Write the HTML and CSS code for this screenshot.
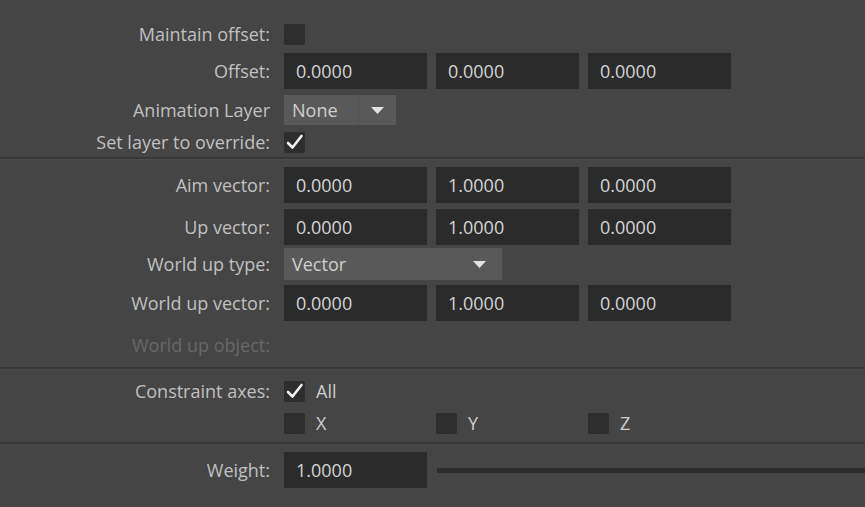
FILE: index.html
```html
<!DOCTYPE html>
<html lang="en">
<head>
    <meta charset="UTF-8">
    <meta name="viewport" content="width=device-width, initial-scale=1.0">
    <title>Aim Constraint Options</title>
    <link rel="stylesheet" href="styles.css">
</head>
<body>
    <div class="panel">
        <div class="row row-check first">
            <span class="label">Maintain offset:</span>
            <div class="controls"><span class="check"></span></div>
        </div>
        <div class="row row-field gap8">
            <span class="label">Offset:</span>
            <div class="triple">
                <div class="field">0.0000</div>
                <div class="field">0.0000</div>
                <div class="field">0.0000</div>
            </div>
        </div>
        <div class="row row-menu gap6">
            <span class="label">Animation Layer</span>
            <div class="controls">
                <div class="menu menu-small">
                    <span class="menu-text">None</span>
                    <span class="menu-btn">
                        <svg width="13" height="7" viewBox="0 0 13 7"><polygon points="0,0 13,0 6.5,7" fill="#e2e2e2"/></svg>
                    </span>
                </div>
            </div>
        </div>
        <div class="row row-check gap6">
            <span class="label">Set layer to override:</span>
            <div class="controls">
                <span class="check">
                    <svg width="21" height="21" viewBox="0 0 21 21"><polyline points="4,11 8.5,15.5 17.5,4" fill="none" stroke="#f2f2f2" stroke-width="2.6" stroke-linecap="round" stroke-linejoin="round"/></svg>
                </span>
            </div>
        </div>

        <div class="sep sep-a"></div>

        <div class="row row-field gap8">
            <span class="label">Aim vector:</span>
            <div class="triple">
                <div class="field">0.0000</div>
                <div class="field">1.0000</div>
                <div class="field">0.0000</div>
            </div>
        </div>
        <div class="row row-field gap6">
            <span class="label">Up vector:</span>
            <div class="triple">
                <div class="field">0.0000</div>
                <div class="field">1.0000</div>
                <div class="field">0.0000</div>
            </div>
        </div>
        <div class="row row-wide gap3">
            <span class="label">World up type:</span>
            <div class="controls">
                <div class="menu menu-wide">
                    <span class="menu-text">Vector</span>
                    <span class="menu-arrow">
                        <svg width="13" height="7" viewBox="0 0 13 7"><polygon points="0,0 13,0 6.5,7" fill="#e2e2e2"/></svg>
                    </span>
                </div>
            </div>
        </div>
        <div class="row row-field gap5">
            <span class="label">World up vector:</span>
            <div class="triple">
                <div class="field">0.0000</div>
                <div class="field">1.0000</div>
                <div class="field">0.0000</div>
            </div>
        </div>
        <div class="row row-field gap6">
            <span class="label dim">World up object:</span>
            <div class="controls"></div>
        </div>

        <div class="sep sep-b"></div>

        <div class="row row-check gap11">
            <span class="label">Constraint axes:</span>
            <div class="axes">
                <div class="axis">
                    <span class="check">
                        <svg width="21" height="21" viewBox="0 0 21 21"><polyline points="4,11 8.5,15.5 17.5,4" fill="none" stroke="#f2f2f2" stroke-width="2.6" stroke-linecap="round" stroke-linejoin="round"/></svg>
                    </span>
                    <span class="axis-name">All</span>
                </div>
            </div>
        </div>
        <div class="row row-check gap10">
            <span class="label"></span>
            <div class="axes">
                <div class="axis"><span class="check"></span><span class="axis-name">X</span></div>
                <div class="axis"><span class="check"></span><span class="axis-name">Y</span></div>
                <div class="axis"><span class="check"></span><span class="axis-name">Z</span></div>
            </div>
        </div>

        <div class="sep sep-c"></div>

        <div class="row row-field gap8">
            <span class="label">Weight:</span>
            <div class="weight">
                <div class="field">1.0000</div>
                <div class="track"></div>
            </div>
        </div>
    </div>
</body>
</html>
```

FILE: styles.css
```css
*{margin:0;padding:0;box-sizing:border-box;}
body{background:#454545;font-family:"Open Sans",sans-serif;font-size:18px;color:#c0c0c0;overflow:hidden;}
.panel{padding-top:23px;}
.row{display:grid;grid-template-columns:270px 1fr;column-gap:14px;align-items:center;}
.row-check{height:22px;}
.row-field{height:36px;}
.row-menu{height:30px;}
.row-wide{height:32px;}
.gap3{margin-top:3px;}
.gap5{margin-top:5px;}
.gap6{margin-top:6px;}
.gap8{margin-top:8px;}
.gap10{margin-top:10px;}
.gap11{margin-top:11px;}
.label{text-align:right;white-space:nowrap;line-height:22px;}
.label.dim{color:#686868;}
.controls{display:flex;align-items:center;height:100%;}
.triple{display:grid;grid-template-columns:repeat(3,143px);column-gap:9px;height:100%;}
.field{height:36px;background:#2b2b2b;color:#d4d4d4;padding-left:12px;display:flex;align-items:center;}
.check{width:21px;height:21px;background:#2d2d2d;border-radius:2px;display:flex;align-items:center;justify-content:center;}
.menu{display:flex;align-items:center;background:#595959;color:#cfcfcf;}
.menu-small{width:112px;height:30px;}
.menu-wide{width:218px;height:32px;}
.menu-text{flex:1;padding-left:8px;}
.menu-btn{width:38px;height:100%;border-left:1px solid #525252;display:flex;align-items:center;justify-content:center;}
.menu-arrow{width:30px;display:flex;align-items:center;justify-content:flex-start;padding-left:1px;}
.sep{height:2px;background:#383838;box-shadow:0 1px 0 #4b4b4b;}
.sep-a{margin-top:4px;}
.sep-b{margin-top:4px;}
.sep-c{margin-top:8px;}
.axes{display:grid;grid-template-columns:repeat(3,143px);column-gap:9px;}
.axis{display:flex;align-items:center;column-gap:11px;}
.axis-name{color:#cdcdcd;line-height:22px;}
.weight{display:flex;align-items:center;height:100%;}
.weight .field{width:143px;flex:none;}
.track{flex:1;height:5px;margin-left:10px;background:#2c2c2c;}
```
